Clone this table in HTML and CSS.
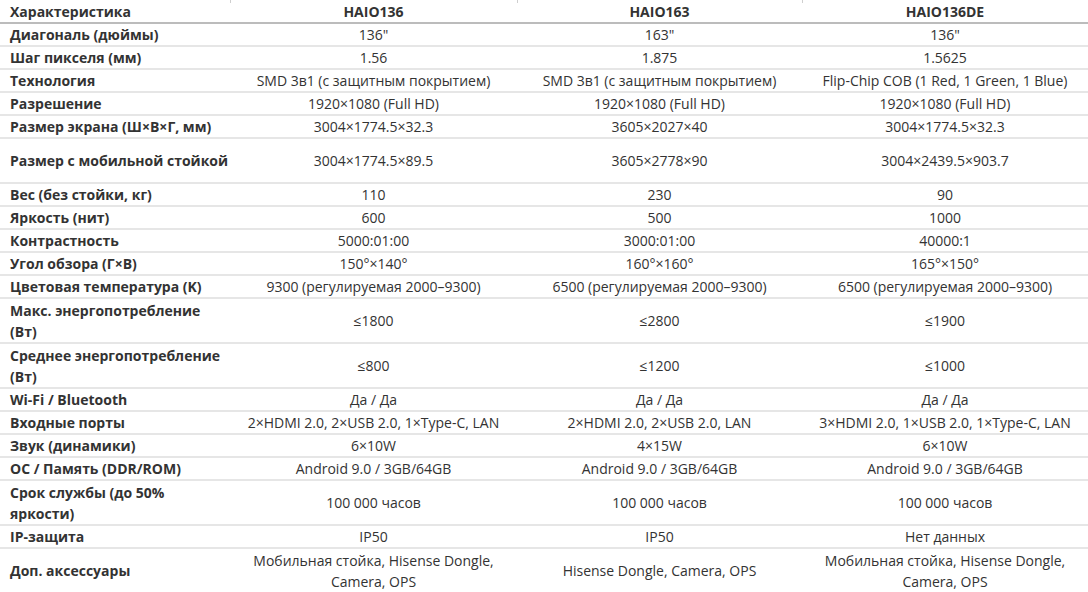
FILE: index.html
```html
<!DOCTYPE html>
<html lang="ru">
<head>
<meta charset="utf-8">
<link rel="stylesheet" href="styles.css">
</head>
<body>
<table class="spec">
  <colgroup>
    <col class="c1"><col class="c2"><col class="c3"><col class="c4">
  </colgroup>
  <thead>
    <tr><th class="label">Характеристика</th><th>HAIO136</th><th>HAIO163</th><th>HAIO136DE</th></tr>
  </thead>
  <tbody>
    <tr><td class="label">Диагональ (дюймы)</td><td>136"</td><td>163"</td><td>136"</td></tr>
    <tr><td class="label">Шаг пикселя (мм)</td><td>1.56</td><td>1.875</td><td>1.5625</td></tr>
    <tr><td class="label">Технология</td><td>SMD 3в1 (с защитным покрытием)</td><td>SMD 3в1 (с защитным покрытием)</td><td>Flip-Chip COB (1 Red, 1 Green, 1 Blue)</td></tr>
    <tr><td class="label">Разрешение</td><td>1920×1080 (Full HD)</td><td>1920×1080 (Full HD)</td><td>1920×1080 (Full HD)</td></tr>
    <tr><td class="label">Размер экрана (Ш×В×Г, мм)</td><td>3004×1774.5×32.3</td><td>3605×2027×40</td><td>3004×1774.5×32.3</td></tr>
    <tr class="dbl"><td class="label">Размер с мобильной стойкой</td><td>3004×1774.5×89.5</td><td>3605×2778×90</td><td>3004×2439.5×903.7</td></tr>
    <tr><td class="label">Вес (без стойки, кг)</td><td>110</td><td>230</td><td>90</td></tr>
    <tr><td class="label">Яркость (нит)</td><td>600</td><td>500</td><td>1000</td></tr>
    <tr><td class="label">Контрастность</td><td>5000:01:00</td><td>3000:01:00</td><td>40000:1</td></tr>
    <tr><td class="label">Угол обзора (Г×В)</td><td>150°×140°</td><td>160°×160°</td><td>165°×150°</td></tr>
    <tr><td class="label">Цветовая температура (K)</td><td>9300 (регулируемая 2000–9300)</td><td>6500 (регулируемая 2000–9300)</td><td>6500 (регулируемая 2000–9300)</td></tr>
    <tr class="dbl"><td class="label">Макс. энергопотребление<br>(Вт)</td><td>≤1800</td><td>≤2800</td><td>≤1900</td></tr>
    <tr class="dbl"><td class="label">Среднее энергопотребление<br>(Вт)</td><td>≤800</td><td>≤1200</td><td>≤1000</td></tr>
    <tr><td class="label">Wi-Fi / Bluetooth</td><td>Да / Да</td><td>Да / Да</td><td>Да / Да</td></tr>
    <tr><td class="label">Входные порты</td><td>2×HDMI 2.0, 2×USB 2.0, 1×Type-C, LAN</td><td>2×HDMI 2.0, 2×USB 2.0, LAN</td><td>3×HDMI 2.0, 1×USB 2.0, 1×Type-C, LAN</td></tr>
    <tr><td class="label">Звук (динамики)</td><td>6×10W</td><td>4×15W</td><td>6×10W</td></tr>
    <tr><td class="label">ОС / Память (DDR/ROM)</td><td>Android 9.0 / 3GB/64GB</td><td>Android 9.0 / 3GB/64GB</td><td>Android 9.0 / 3GB/64GB</td></tr>
    <tr class="dbl"><td class="label">Срок службы (до 50%<br>яркости)</td><td>100 000 часов</td><td>100 000 часов</td><td>100 000 часов</td></tr>
    <tr><td class="label">IP-защита</td><td>IP50</td><td>IP50</td><td>Нет данных</td></tr>
    <tr class="dbl"><td class="label">Доп. аксессуары</td><td>Мобильная стойка, Hisense Dongle,<br>Camera, OPS</td><td>Hisense Dongle, Camera, OPS</td><td>Мобильная стойка, Hisense Dongle,<br>Camera, OPS</td></tr>
  </tbody>
</table>
</body>
</html>
```
FILE: styles.css
```css
html, body {
  margin: 0;
  padding: 0;
  background: #ffffff;
}
body {
  font-family: "Open Sans", "Noto Sans", sans-serif;
  font-size: 14px;
  color: #333333;
  overflow: hidden;
}
.spec {
  width: 1088px;
  border-collapse: collapse;
  table-layout: fixed;
}
.c1 { width: 230px; }
.c2 { width: 287px; }
.c3 { width: 285px; }
.c4 { width: 286px; }
.spec th, .spec td {
  padding: 0 2px;
  line-height: 21px;
  text-align: center;
  vertical-align: middle;
  white-space: nowrap;
}
.spec th {
  position: relative;
  font-weight: 700;
  height: 22px;
  border-bottom: 2px solid #bcbcbc;
}
.spec th + th::before {
  content: "";
  position: absolute;
  left: 0;
  top: 0;
  width: 1px;
  height: 3px;
  background: #cfcfcf;
}
.spec td {
  height: 21px;
  border-bottom: 2px solid #e6e6e6;
}
.spec .label {
  text-align: left;
  padding-left: 10px;
  font-weight: 700;
}
.spec .dbl td {
  height: 43px;
}
```
